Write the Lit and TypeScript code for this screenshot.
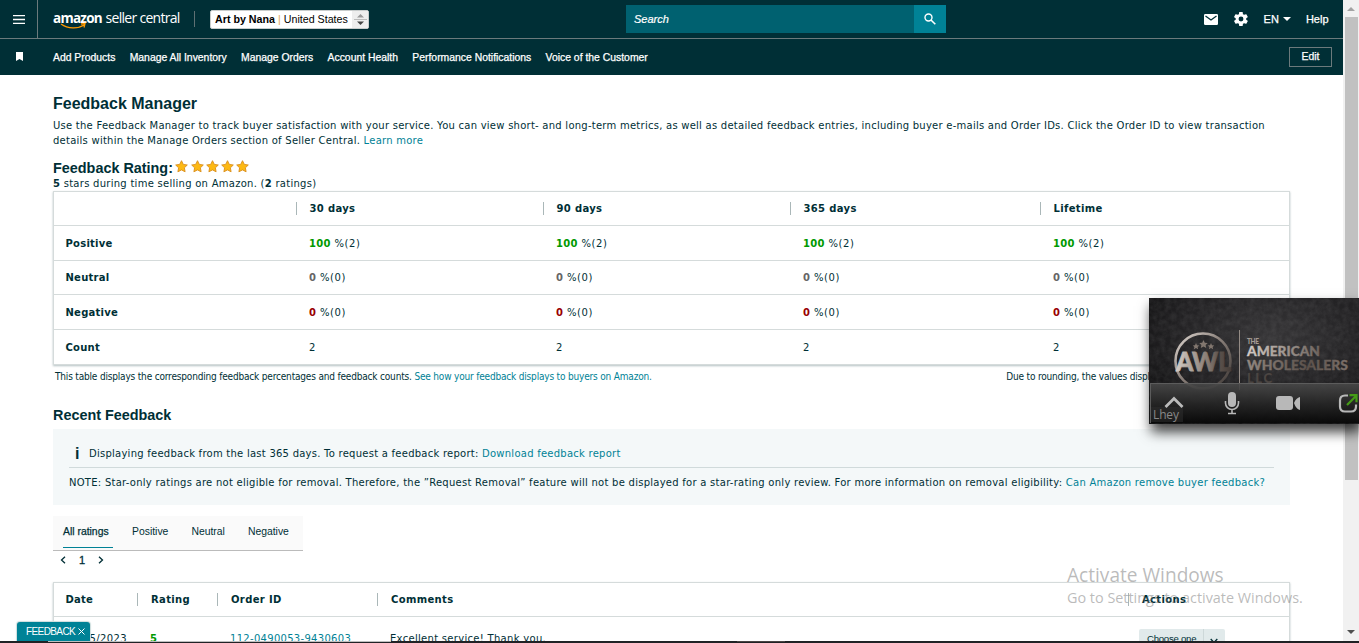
import { LitElement, html, css, svg } from "lit";
import { customElement } from "lit/decorators.js";

const NAV = ["Add Products", "Manage All Inventory", "Manage Orders", "Account Health", "Performance Notifications", "Voice of the Customer"];
const PERIODS = ["30 days", "90 days", "365 days", "Lifetime"];
const ROWS = [
  { name: "Positive", value: "100", count: "2", tone: "good" },
  { name: "Neutral", value: "0", count: "0", tone: "flat" },
  { name: "Negative", value: "0", count: "0", tone: "bad" },
];

@customElement("meeting-panel")
class MeetingPanel extends LitElement {
  static styles = css`
    :host { display: block; width: 210px; height: 126px; box-shadow: 2px 8px 12px rgba(0,0,0,.75); }
    svg { display: block; }
    .sans { font-family: Lato, "Open Sans", sans-serif; font-weight: 900; }
    .name { font-family: "Open Sans", sans-serif; font-size: 12px; fill: #888; }
  `;
  render() {
    return html`<svg width="210" height="126" viewBox="0 0 210 126">
      <defs>
        <radialGradient id="wall" cx=".58" cy=".3" r=".75"><stop offset="0" stop-color="#363537"/><stop offset=".6" stop-color="#222123"/><stop offset="1" stop-color="#111112"/></radialGradient>
        <linearGradient id="bar" x1="0" x2="0" y1="0" y2="1"><stop offset="0" stop-color="#484848"/><stop offset=".5" stop-color="#262626"/><stop offset="1" stop-color="#080808"/></linearGradient>
        <linearGradient id="metal" x1="0" x2="1" y1="0" y2="1"><stop offset="0" stop-color="#e0d8d2"/><stop offset=".45" stop-color="#8b817b"/><stop offset="1" stop-color="#3b3532"/></linearGradient>
        <linearGradient id="mono" x1="0" x2="1"><stop offset="0" stop-color="#d5cdc6"/><stop offset=".6" stop-color="#85786f"/><stop offset=".78" stop-color="#5c524c"/><stop offset="1" stop-color="#453d39"/></linearGradient>
        <linearGradient id="word" x1="0" x2="1"><stop offset="0" stop-color="#d5cdc7"/><stop offset="1" stop-color="#6d635d"/></linearGradient>
        <linearGradient id="word2" x1="0" x2="1"><stop offset="0" stop-color="#92877f"/><stop offset=".6" stop-color="#5b514b"/><stop offset="1" stop-color="#7c7069"/></linearGradient>
        <filter id="grain"><feTurbulence type="fractalNoise" baseFrequency=".18" numOctaves="3" seed="4"/><feColorMatrix values="0 0 0 0 .6  0 0 0 0 .6  0 0 0 0 .6  .5 0 0 0 -.13"/></filter>
      </defs>
      <rect width="210" height="126" fill="url(#wall)"/>
      <rect width="210" height="126" filter="url(#grain)" opacity=".3"/>
      <circle cx="54" cy="63" r="27.500" fill="none" stroke="url(#metal)" stroke-width="2.600"/>
      <g fill="#82776f"><path d="M47 45l1 2.200 2.300.2-1.700 1.600.5 2.300-2.100-1.200-2.100 1.200.5-2.300-1.700-1.600 2.300-.2z"/><path d="M54.500 42l1.300 2.800 3 .3-2.200 2 .6 3-2.700-1.500-2.700 1.500.6-3-2.200-2 3-.3z"/><path d="M62 45l1 2.200 2.300.2-1.700 1.600.5 2.300-2.100-1.200-2.100 1.200.5-2.300-1.700-1.600 2.300-.2z"/></g>
      <text class="sans" x="27" y="72.500" font-size="26" textLength="55" lengthAdjust="spacingAndGlyphs" fill="url(#mono)" stroke="url(#mono)" stroke-width=".8">AWL</text>
      <path d="M90.500 32v60" stroke="#948b85"/>
      <text class="sans" x="98" y="46" font-size="6.500" textLength="12" fill="#a49b94">THE</text>
      <text class="sans" x="98" y="58" font-size="13.500" textLength="73" lengthAdjust="spacingAndGlyphs" fill="url(#word)" stroke="url(#word)" stroke-width=".3">AMERICAN</text>
      <text class="sans" x="98" y="72" font-size="13.500" textLength="101" lengthAdjust="spacingAndGlyphs" fill="url(#word2)" stroke="url(#word2)" stroke-width=".3">WHOLESALERS</text>
      <text class="sans" x="98" y="85" font-size="13" textLength="25" fill="#4b4542">LLC</text>
      <rect x="1" y="86" width="209" height="39" fill="url(#bar)" opacity=".9"/>
      <path d="M1 85.500h209M1.500 85v40" stroke="#5c5c5c" fill="none"/>
      <rect x="2" y="109" width="32" height="15" fill="#303030" opacity=".5"/>
      <path d="M16.500 109l8.500-8.500 8.500 8.500" fill="none" stroke="#bbb" stroke-width="2.800"/>
      <rect x="79" y="94" width="8" height="15" rx="4" fill="#b8b8b8"/>
      <path d="M76.500 103v2a6.500 6.500 0 0 0 13 0v-2M83 111.500v4M79 115.500h8" fill="none" stroke="#b8b8b8" stroke-width="1.600"/>
      <rect x="127" y="98" width="17" height="14" rx="3" fill="#b8b8b8"/><path d="M145 105q2-5 6-6v13q-4-1-6-7z" fill="#b8b8b8"/>
      <path d="M199 97.500h-3q-5 0-5 5v6q0 5 5 5h6q5 0 5-5v-2" fill="none" stroke="#b8b8b8" stroke-width="2.200"/>
      <path d="M198 107l9-9M200.500 97.200h7v7" fill="none" stroke="#459c16" stroke-width="2.200"/>
      <text class="name" x="4" y="121" textLength="26">Lhey</text>
    </svg>`;
  }
}

@customElement("app-root")
class AppRoot extends LitElement {
  static styles = css`
    :host { display: grid; grid-template-columns: 1343px 16px; width: 1359px; height: 643px; overflow: hidden; position: relative; background: #fff; color: #002f36; font: 10px/15px "DejaVu Sans", sans-serif; }
    * { box-sizing: border-box; }
    .page { height: 643px; overflow: hidden; min-width: 0; }
    a { color: #008296; text-decoration: none; }
    svg { display: block; flex: none; }
    .top { display: flex; align-items: center; height: 39px; background: #002f36; color: #fff; border-bottom: 1px solid #6b7a7c; font-family: "Liberation Sans", sans-serif; }
    .menu { width: 38px; height: 38px; border-right: 1px solid #6b7a7c; display: grid; place-items: center; }
    .logo { margin-left: 15px; }
    .logo text { font-family: "Open Sans", sans-serif; fill: #fff; }
    .brand { font-size: 13.500px; font-weight: 700; letter-spacing: -.75px; }
    .product { font-size: 14px; letter-spacing: -.7px; }
    .rule { width: 1px; height: 16px; background: #5e7073; margin: 0 15px 0 13px; }
    .account { display: flex; align-items: center; width: 159px; height: 19px; border: 1px solid #c8cccc; border-radius: 2px; background: #fff; color: #000; font-size: 10.700px; line-height: 17px; white-space: nowrap; }
    .account p { width: 141px; padding-left: 4px; padding-top: 1px; }
    .account i { color: #e0a85a; font-style: normal; }
    .spin { width: 16px; height: 17px; background: #eee; display: grid; place-items: center; }
    .search { display: flex; width: 320px; height: 28px; margin-left: 257px; background: #006170; font-size: 11px; font-style: italic; line-height: 28px; }
    .search p { flex: 1; padding-left: 8px; -webkit-text-stroke: .2px #fff; }
    .go { width: 32px; background: #008296; display: grid; place-items: center; }
    .tools { margin-left: auto; display: flex; align-items: center; padding-right: 14.500px; font-size: 11px; -webkit-text-stroke: .25px #fff; }
    .lang { display: flex; align-items: center; gap: 4.500px; margin: 0 14.500px 0 16px; }
    .gear { margin-left: 16px; }
    .favs { display: flex; align-items: center; height: 36px; background: #002f36; color: #fff; font: 10.400px/36px "Liberation Sans", sans-serif; -webkit-text-stroke: .25px #fff; }
    .favs nav { display: flex; gap: 14.300px; margin-left: 29px; padding-top: 1px; }
    .mark { margin-left: 15px; }
    .edit { margin: 0 11px 0 auto; width: 43px; height: 20px; border: 1px solid #6b7a7c; text-align: center; line-height: 18px; }
    main { padding: 19px 53px 0; }
    h1, h2, p { margin: 0; }
    h1 { font: bold 16px/20px "Liberation Sans", sans-serif; }
    h2 { font: bold 14.400px/20px "Liberation Sans", sans-serif; }
    .intro { margin-top: 4px; letter-spacing: .25px; white-space: nowrap; }
    .rating { display: flex; margin-top: 10px; height: 18px; gap: 2.500px; }
    .stars { display: flex; gap: 1.200px; padding-top: 2px; }
    .sub { letter-spacing: .27px; height: 15px; }
    .card { width: 1237px; border: 1px solid #d5dbdb; box-shadow: 0 1px 2px rgba(0,47,54,.3); }
    .tr { display: grid; grid-template-columns: 242px 247px 247px 250px 1fr; height: 34.600px; align-items: center; border-bottom: 1px solid #d5dbdb; letter-spacing: .6px; padding-top: 1px; }
    .tr:first-child { height: 34px; padding-top: 0; }
    .tr:last-child { border: 0; padding-top: 0; }
    .tr > * { padding-left: 13px; }
    .tr b { letter-spacing: .25px; }
    .tr > :first-child { padding-left: 11.500px; font-weight: bold; letter-spacing: .25px; }
    .tr .th { padding-left: 0; display: flex; align-items: center; font-weight: bold; letter-spacing: .35px; }
    .th::before { content: ""; width: 1px; height: 13px; background: #aab7b8; margin-right: 12.500px; }
    .good b { color: #090; } .flat b { color: #666; } .bad b { color: #900; }
    .caption { display: flex; justify-content: space-between; margin: 4px 0 0 2px; font: 10px/15px "DejaVu Sans Condensed", "DejaVu Sans", sans-serif; font-stretch: condensed; letter-spacing: -.18px; white-space: nowrap; }
    .recent { margin-top: 21px; }
    .info { margin-top: 4px; width: 1237px; height: 76px; padding: 16px 16px 0; background: #f4f8f9; letter-spacing: .25px; white-space: nowrap; }
    .line { display: flex; align-items: center; height: 23px; border-bottom: 1px solid #d0dadb; padding: 0 0 5px 6px; }
    .line b { width: 14px; font: bold 16px/16px "Liberation Sans", sans-serif; }
    .note { margin-top: 7px; letter-spacing: .26px; }
    .tabs { display: flex; width: 250px; height: 35px; margin-top: 11px; padding: 0 10px; gap: 23px; background: #fafafa; border-bottom: 1px solid #bbb; font: 10.400px/32px "Liberation Sans", sans-serif; }
    .tabs span { height: 32px; }
    .tabs .on { border-bottom: 1px solid #008296; width: 50px; margin-right: -4px; -webkit-text-stroke: .25px #002f36; }
    .pager { display: flex; align-items: center; height: 18px; gap: 13px; padding-left: 7px; font: 11px/18px "Liberation Sans", sans-serif; }
    .pager b { font-weight: 500; -webkit-text-stroke: .3px; }
    .list { margin-top: 13px; }
    .list .tr { grid-template-columns: 83px 80px 160px 751px 1fr; height: 34px; }
    .list .th::before { margin-right: 13px; }
    .list .data { height: 42px; letter-spacing: .3px; }
    .list .data > :first-child { font-weight: normal; letter-spacing: .4px; }
    .list .tr b { color: #090; }
    .list .choose { display: flex; margin: 3px 0 0 11px; width: 86px; height: 22px; padding: 0 0 0 8px; background: #e1eaeb; border-radius: 2px; font: 9.600px/20px "Liberation Sans", sans-serif; letter-spacing: -.25px; }
    .choose svg { margin-left: 7px; }
    .scroll { background: #f1f1f1; display: flex; flex-direction: column; align-items: center; height: 643px; padding: 7px 0 9px; }
    .thumb { width: 13px; height: 463px; background: #c1c1c1; margin: 6px 0 auto; }
    .meeting { position: absolute; left: 1149px; top: 298px; }
    .watermark { position: absolute; left: 1067px; top: 563px; color: rgba(120,120,120,.5); white-space: nowrap; }
    .watermark h3 { margin: 0; font: 19.100px/24px "Open Sans", sans-serif; }
    .watermark p { font: 14.400px/22px "Open Sans", sans-serif; }
    .tag { position: absolute; left: 17px; top: 622px; width: 73px; height: 21px; display: flex; align-items: center; gap: 3px; background: #008296; color: #fff; border-radius: 3px 3px 0 0; font: 10px/19px "Liberation Sans", sans-serif; letter-spacing: -.6px; padding: 0 0 2px 9px; white-space: nowrap; box-shadow: 0 0 1px 1px #cdd; }
    .edge { position: absolute; left: 0; right: 0; bottom: 0; height: 2px; background: linear-gradient(90deg, transparent 48px, #bfbfbf 48px 391px, transparent 391px 737px, #4a4444 737px 785px, transparent 785px) 0 0/100% 1px no-repeat #202225; }
  `;
  render() {
    const star = svg`<path d="M6.500 .7l1.800 3.700 4 .6-2.900 2.800.7 4-3.600-1.900-3.600 1.900.7-4L.7 5l4-.6z" fill="#fdb913" stroke="#d98d1c" stroke-width=".9" stroke-linejoin="round"/>`;
    return html`<div class="page">
      <header class="top">
        <div class="menu"><svg width="12" height="9"><path d="M0 .5h12M0 4.500h12M0 8.500h12" stroke="#fff" stroke-width="1.300"/></svg></div>
        <svg class="logo" width="128" height="22"><text class="brand" x="0" y="14.500">amazon</text><text class="product" x="52.500" y="14.500">seller central</text><path d="M8 16c7 5 17 5 23 1M28 16l4-.5-1 4" fill="none" stroke="#f90" stroke-width="1.300"/></svg>
        <div class="rule"></div>
        <div class="account"><p><b>Art by Nana</b> <i>|</i> United States</p><div class="spin"><svg width="13" height="13"><path d="M3 4.500L6.500 1 10 4.500z" fill="#999"/><path d="M0 6.500h13" stroke="#bbb"/><path d="M3 8.500L6.500 12 10 8.500z" fill="#444"/></svg></div></div>
        <div class="search"><p>Search</p><div class="go"><svg width="12" height="12"><circle cx="4.500" cy="4.500" r="3.500" fill="none" stroke="#fff" stroke-width="1.400"/><path d="M7 7l4.300 4.300" stroke="#fff" stroke-width="1.600"/></svg></div></div>
        <div class="tools">
          <svg width="14" height="11"><rect width="14" height="11" rx="1.200" fill="#fff"/><path d="M1.500 2L7 6l5.500-4" fill="none" stroke="#002f36" stroke-width="1.300"/></svg>
          <svg class="gear" width="14" height="14" viewBox="2 2 20 20"><path fill="#fff" d="M19.400 13c0-.3.100-.6.100-1s0-.7-.1-1l2.100-1.600c.2-.2.200-.4.100-.6l-2-3.500c-.1-.2-.4-.3-.6-.2l-2.500 1c-.5-.4-1.100-.7-1.700-1l-.4-2.600c0-.3-.2-.5-.5-.5h-4c-.3 0-.5.200-.5.500L9 5.100c-.6.300-1.200.6-1.700 1l-2.500-1c-.2-.1-.5 0-.6.200l-2 3.500c-.1.200-.1.500.1.600L4.500 11c0 .3-.1.700-.1 1s0 .7.1 1l-2.200 1.600c-.2.200-.2.400-.1.600l2 3.500c.1.200.4.300.6.200l2.500-1c.5.400 1.100.7 1.700 1l.4 2.600c0 .3.200.5.500.5h4c.3 0 .5-.2.500-.5l.4-2.600c.6-.3 1.200-.6 1.700-1l2.500 1c.2.100.5 0 .6-.2l2-3.500c.1-.2.100-.5-.1-.6zM12 15.500a3.500 3.500 0 1 1 0-7 3.500 3.500 0 0 1 0 7z"/></svg>
          <div class="lang">EN <svg width="8" height="4"><path d="M0 0h8L4 4z" fill="#fff"/></svg></div><span>Help</span>
        </div>
      </header>
      <div class="favs"><svg class="mark" width="9" height="10"><path d="M1 0h7v9L4.500 7 1 9z" fill="#fff"/></svg><nav>${NAV.map((n) => html`<span>${n}</span>`)}</nav><div class="edit">Edit</div></div>
      <main>
        <h1>Feedback Manager</h1>
        <p class="intro">Use the Feedback Manager to track buyer satisfaction with your service. You can view short- and long-term metrics, as well as detailed feedback entries, including buyer e-mails and Order IDs. Click the Order ID to view transaction<br>details within the Manage Orders section of Seller Central. <a>Learn more</a></p>
        <div class="rating"><h2>Feedback Rating:</h2><div class="stars">${[1, 2, 3, 4, 5].map(() => html`<svg width="14" height="13">${star}</svg>`)}</div></div>
        <p class="sub"><b>5</b> stars during time selling on Amazon. (<b>2</b> ratings)</p>
        <section class="card">
          <div class="tr"><span></span>${PERIODS.map((p) => html`<span class="th">${p}</span>`)}</div>
          ${ROWS.map((r) => html`<div class="tr ${r.tone}"><span>${r.name}</span>${PERIODS.map(() => html`<span><b>${r.value}</b> %(${r.count})</span>`)}</div>`)}
          <div class="tr"><span>Count</span>${PERIODS.map(() => html`<span>2</span>`)}</div>
        </section>
        <div class="caption"><span>This table displays the corresponding feedback percentages and feedback counts. <a>See how your feedback displays to buyers on Amazon.</a></span><span>Due to rounding, the values displayed may not total 100 percent.</span></div>
        <h2 class="recent">Recent Feedback</h2>
        <section class="info"><div class="line"><b>i</b><span>Displaying feedback from the last 365 days. To request a feedback report: <a>Download feedback report</a></span></div>
        <p class="note">NOTE: Star-only ratings are not eligible for removal. Therefore, the ”Request Removal” feature will not be displayed for a star-rating only review. For more information on removal eligibility: <a>Can Amazon remove buyer feedback?</a></p></section>
        <div class="tabs"><span class="on">All ratings</span><span>Positive</span><span>Neutral</span><span>Negative</span></div>
        <div class="pager"><svg width="6" height="8"><path d="M5 .7L1.500 4 5 7.300" fill="none" stroke="#002f36" stroke-width="1.300"/></svg><b>1</b><svg width="6" height="8"><path d="M1 .7L4.500 4 1 7.300" fill="none" stroke="#002f36" stroke-width="1.300"/></svg></div>
        <section class="card list">
          <div class="tr"><span>Date</span>${["Rating", "Order ID", "Comments", "Actions"].map((p) => html`<span class="th">${p}</span>`)}</div>
          <div class="tr data"><span>10/15/2023</span><span><b>5</b></span><a>112-0490053-9430603</a><span>Excellent service! Thank you.</span><div class="choose">Choose one<svg width="20" height="22"><path d="M.5 0v22" stroke="#cdd8d9"/><path d="M7.700 10l3.300 3.500 3.300-3.500" fill="none" stroke="#002f36" stroke-width="1.300"/></svg></div></div>
        </section>
      </main></div>
      <div class="scroll"><svg width="8" height="4"><path d="M0 4L4 0l4 4z" fill="#a3a3a3"/></svg><div class="thumb"></div><svg width="8" height="4"><path d="M0 0h8L4 4z" fill="#505050"/></svg></div>
      <div class="watermark"><h3>Activate Windows</h3><p>Go to Settings to activate Windows.</p></div>
      <div class="tag">FEEDBACK<svg width="7" height="7"><path d="M.5 .5l6 6M6.500 .5l-6 6" stroke="#fff"/></svg></div>
      <div class="edge"></div>
      <meeting-panel class="meeting"></meeting-panel>`;
  }
}
